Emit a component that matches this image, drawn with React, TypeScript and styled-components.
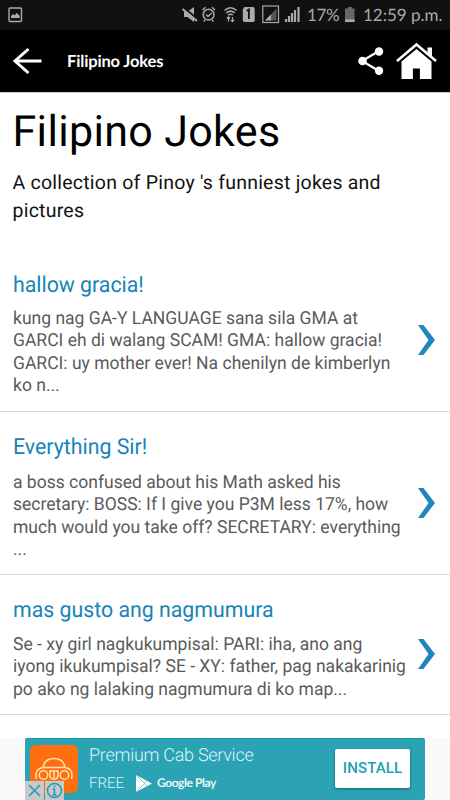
import React from "react";
import styled, { createGlobalStyle } from "styled-components";

const GlobalStyle = createGlobalStyle`
  * { box-sizing: border-box; }
  html, body { margin: 0; padding: 0; background: #fff; }
  body { font-family: Roboto, sans-serif; overflow: hidden; text-rendering: geometricPrecision; }
`;

const Screen = styled.div`
  width: 450px;
  height: 800px;
  display: flex;
  flex-direction: column;
  overflow: hidden;
  background: #fff;
`;

const StatusBar = styled.div`
  height: 30px;
  flex: none;
  background: #111;
  display: flex;
  align-items: center;
  justify-content: space-between;
  padding: 0 9px 0 8px;
`;

const StatusIcons = styled.div`
  display: flex;
  align-items: center;
`;

const StatusText = styled.span<{ $width: number; $spacing: number }>`
  width: ${(p) => p.$width}px;
  font: 400 17px/30px Lato, sans-serif;
  letter-spacing: ${(p) => p.$spacing}px;
  white-space: nowrap;
  color: #aaa;
`;

const AppBar = styled.header`
  height: 62px;
  flex: none;
  background: #000;
  display: flex;
  align-items: center;
  padding: 0 13px 0 12px;
`;

const AppTitle = styled.span`
  flex: 1;
  margin-left: 25px;
  font: 700 16.5px/24px Lato, sans-serif;
  letter-spacing: -0.15px;
  color: #fff;
`;

const Intro = styled.section`
  height: 157px;
  flex: none;
  padding: 12px 12.5px 0;
  border-top: 1px solid #ccc;
`;

const Heading = styled.h1`
  margin: 0;
  font-weight: 400;
  font-size: 43px;
  line-height: 54px;
  letter-spacing: 0.33px;
  color: #000;
  white-space: nowrap;
`;

const Lead = styled.p`
  margin: 10px 0 0;
  font-size: 19.5px;
  line-height: 27.5px;
  letter-spacing: 0.23px;
  color: #111;
  white-space: nowrap;
`;

const JokeRow = styled.article<{ $height: number }>`
  height: ${(p) => p.$height}px;
  flex: none;
  display: flex;
  justify-content: space-between;
  padding: 23px 15px 0 12.5px;
  border-bottom: 1px solid #d9d9d9;
`;

const JokeTitle = styled.h2<{ $lift: number }>`
  margin: ${(p) => -p.$lift}px 0 0;
  font-weight: 400;
  font-size: 22px;
  line-height: 28px;
  color: #1484b8;
  white-space: nowrap;
  transform: scaleX(0.968);
  transform-origin: 0 0;
`;

const JokeText = styled.p<{ $gap: number }>`
  margin: ${(p) => p.$gap}px 0 0;
  font-size: 18px;
  line-height: 22.4px;
  color: #5a5a5a;
  white-space: nowrap;
  transform: scaleX(0.973);
  transform-origin: 0 0;
`;

const Line = styled.span`
  display: block;
`;

const Chevron = styled.svg<{ $top: number }>`
  width: 17px;
  height: 30px;
  flex: none;
  margin-top: ${(p) => p.$top}px;
`;

const AdArea = styled.footer`
  margin-top: 23px;
  height: 62px;
  flex: none;
  background: #fafafa;
  padding: 0 25px;
`;

const AdCard = styled.div`
  position: relative;
  height: 62px;
  background: #2ba3b5;
  border-top: 1px solid #159aae;
  border-radius: 2px;
  display: flex;
  padding: 6px 15px 0 5px;
`;

const AdLogo = styled.svg`
  width: 48px;
  height: 48px;
  flex: none;
`;

const AdCopy = styled.div`
  flex: 1;
  margin-left: 11px;
  color: #dff5f8;
`;

const AdTitle = styled.div`
  font-size: 18px;
  font-weight: 300;
  line-height: 22px;
  letter-spacing: -0.28px;
  white-space: nowrap;
`;

const AdMeta = styled.div`
  display: flex;
  align-items: center;
  margin-top: 4px;
  height: 24px;
  font-size: 15px;
  font-weight: 300;
`;

const PlaySlot = styled.span`
  display: flex;
  margin-left: 11px;
`;

const StoreName = styled.span`
  margin-left: 4px;
  font: 700 12px/20px Lato, sans-serif;
  letter-spacing: -0.45px;
  color: #e8f8fa;
  white-space: nowrap;
`;

const InstallButton = styled.button`
  width: 75px;
  height: 39px;
  margin-top: 4px;
  padding: 0;
  border: 0;
  border-radius: 2px;
  background: #fff;
  box-shadow: 0 1px 3px rgba(0, 60, 70, 0.6);
  font: 500 15px/37px Roboto, sans-serif;
  letter-spacing: 0.1px;
  color: #1fa0b2;
`;

const AdChoices = styled.svg`
  position: absolute;
  left: 0;
  bottom: 0;
  width: 39px;
  height: 19px;
`;

interface Joke {
  title: string;
  lines: string[];
  height: number;
  lift: number;
  gap: number;
  chevronTop: number;
}

const jokes: Joke[] = [
  {
    title: "hallow gracia!",
    height: 163,
    lift: 0,
    gap: 8,
    chevronTop: 53,
    lines: [
      "kung nag GA-Y LANGUAGE sana sila GMA at",
      "GARCI eh di walang SCAM! GMA: hallow gracia!",
      "GARCI: uy mother ever! Na chenilyn de kimberlyn",
      "ko n...",
    ],
  },
  {
    title: "Everything Sir!",
    height: 163,
    lift: 1,
    gap: 10,
    chevronTop: 53,
    lines: [
      "a boss confused about his Math asked his",
      "secretary: BOSS: If I give you P3M less 17%, how",
      "much would you take off? SECRETARY: everything",
      "...",
    ],
  },
  {
    title: "mas gusto ang nagmumura",
    height: 140,
    lift: 1,
    gap: 9,
    chevronTop: 41,
    lines: [
      "Se - xy girl nagkukumpisal: PARI: iha, ano ang",
      "iyong ikukumpisal? SE - XY: father, pag nakakarinig",
      "po ako ng lalaking nagmumura di ko map...",
    ],
  },
];

const PictureIcon = () => (
  <svg width="15" height="16" viewBox="0 0 15 16">
    <rect x="1" y="1" width="12.5" height="13.5" rx="1" fill="none" stroke="#aaa" strokeWidth="1.4" />
    <path d="M3 11V9l2-2 1.5 1.2L9 6l2.700 3v2z" fill="#aaa" />
  </svg>
);

const Strip = styled.svg`
  width: 122px;
  height: 30px;
  margin-right: 4px;
`;

/* Mute, alarm, wifi, SIM and the two signal meters share one strip. */
const SignalStrip = () => (
  <Strip viewBox="182 0 122 30" fill="none" stroke="#aaa">
    <path d="M185 11.500h3.500L195 7v15l-6.500-5H185z" fill="#aaa" stroke="none" />
    <path d="M184 7l14.500 12" stroke="#111" strokeWidth="2" />
    <path d="M183.500 9l14.500 12" strokeWidth="2" />
    <circle cx="209.600" cy="14.700" r="5.400" strokeWidth="1.500" />
    <path d="M203.500 10l3-2.700M213 7.300l3 2.700M206 20l-1.200 1.700M213.200 20l1.200 1.700M207 14.500l2 2 3.600-3.500" strokeWidth="1.400" />
    <path d="M225.500 10.500q6-5.500 12 0M227.300 13q4.200-3.700 8.400 0M229.200 15.300q2.300-2 4.600 0" strokeWidth="1.500" />
    <path d="M229.500 21.500V17M227.900 18.500l1.600-1.700 1.600 1.700M233.500 17v4.500M231.900 19.900l1.600 1.700 1.600-1.700" strokeWidth="1.200" />
    <path d="M245.500 7h8.500q1.700 0 1.700 1.700v11.500q0 1.700-1.700 1.700h-8.500q-1.700 0-1.700-1.700V9.500z" fill="#aaa" stroke="none" />
    <path d="M247.700 11l2.200-1.500V19" stroke="#111" strokeWidth="1.800" />
    <rect x="263.800" y="6" width="15.700" height="16.500" strokeWidth="1.200" />
    <path d="M266 20.500L277.500 8.500v12z" fill="#555" stroke="none" />
    <path d="M266 20.500l6-6v6z" fill="#aaa" stroke="none" />
    <path d="M287 22v-3M290 22v-6M293 22v-9M296 22V10M299.500 22V7" strokeWidth="2.200" />
  </Strip>
);

const BatteryIcon = () => (
  <svg width="19" height="16" viewBox="0 0 19 16">
    <path d="M4 1.500V0h4v1.500h2.500V15H1V1.500z" fill="#666" />
    <path d="M1 12.500h9.500V15H1z" fill="#aaa" />
  </svg>
);

const BackIcon = () => (
  <svg width="30" height="28" viewBox="0 0 30 28">
    <path d="M29.500 14H3M16.500 2L3 14l13.500 12" fill="none" stroke="#fff" strokeWidth="3" />
  </svg>
);

const ShareIcon = () => (
  <svg width="38" height="30" viewBox="0 0 38 30">
    <path d="M21 5L4 15l17 10" fill="none" stroke="#fff" strokeWidth="2.200" />
    <circle cx="21" cy="5.500" r="4.200" fill="#fff" />
    <circle cx="4.500" cy="15" r="4.300" fill="#fff" />
    <circle cx="21" cy="24.700" r="4.200" fill="#fff" />
  </svg>
);

const HomeIcon = () => (
  <svg width="41" height="38" viewBox="0 0 41 38">
    <path d="M31.500 5.500h4.500v9l-4.500-4.200z" fill="#fff" />
    <path d="M1 19L20.500 2.500 40 19" fill="none" stroke="#fff" strokeWidth="2.600" />
    <path d="M5.500 19.500L20.500 7 35.500 19.500V37H23.900V26.500h-7V37H5.500z" fill="#fff" />
  </svg>
);

const PlayIcon = () => (
  <svg width="18" height="19" viewBox="0 0 18 19">
    <path d="M1 1l16 8.500L1 18z" fill="#fff" />
    <path d="M1.500 1.500l11 11M1.500 17.500l11-11" stroke="#65c0cc" strokeWidth=".8" />
  </svg>
);

export default function App() {
  return (
    <Screen>
      <GlobalStyle />
      <StatusBar>
        <PictureIcon />
        <StatusIcons>
          <SignalStrip />
          <StatusText $width={37} $spacing={-0.3}>17%</StatusText>
          <BatteryIcon />
          <StatusText $width={78} $spacing={0}>12:59 p.m.</StatusText>
        </StatusIcons>
      </StatusBar>
      <AppBar>
        <BackIcon />
        <AppTitle>Filipino Jokes</AppTitle>
        <ShareIcon />
        <HomeIcon />
      </AppBar>
      <Intro>
        <Heading>Filipino Jokes</Heading>
        <Lead>
          A collection of Pinoy 's funniest jokes and
          <br />
          pictures
        </Lead>
      </Intro>
      {jokes.map((joke) => (
        <JokeRow key={joke.title} $height={joke.height}>
          <div>
            <JokeTitle $lift={joke.lift}>{joke.title}</JokeTitle>
            <JokeText $gap={joke.gap}>
              {joke.lines.map((text) => (
                <Line key={text}>{text}</Line>
              ))}
            </JokeText>
          </div>
          <Chevron $top={joke.chevronTop} viewBox="0 0 17 30">
            <path d="M0 0h5.500L17 15 5.500 30H0l10.500-15z" fill="#1e88bb" />
          </Chevron>
        </JokeRow>
      ))}
      <AdArea>
        <AdCard>
          <AdLogo viewBox="0 0 48 48">
            <rect width="48" height="48" rx="6" fill="#ff6f0f" />
            <g fill="none" stroke="#ffe3b0" strokeWidth="1.500">
              <path d="M6.500 34C5 27 7 23.500 13 22.500c1-6 4-9 11-9s10 3 11 9c6 1 8 4.500 6.500 11.500M13 22.500h22" />
              <circle cx="13.500" cy="30" r="4.300" />
              <path d="M20 25.500V30q0 4.300 4 4.300t4-4.300v-4.500M19.500 26h9M24 26v7" />
              <circle cx="34.500" cy="30" r="4.300" />
            </g>
          </AdLogo>
          <AdCopy>
            <AdTitle>Premium Cab Service</AdTitle>
            <AdMeta>
              FREE
              <PlaySlot>
                <PlayIcon />
              </PlaySlot>
              <StoreName>Google Play</StoreName>
            </AdMeta>
          </AdCopy>
          <InstallButton>INSTALL</InstallButton>
          <AdChoices viewBox="0 0 39 19">
            <path d="M0 0h19v19H0zM20 0h19v19H20z" fill="#c9c9c9" />
            <g fill="none" stroke="#199fb5" strokeWidth="1.500">
              <path d="M4 4l11 11M15 4L4 15" />
              <circle cx="29.500" cy="9.500" r="7" />
              <path d="M29.500 4.500v2M27.700 8.300h1.800v5.500M27.500 14h4" />
            </g>
          </AdChoices>
        </AdCard>
      </AdArea>
    </Screen>
  );
}
